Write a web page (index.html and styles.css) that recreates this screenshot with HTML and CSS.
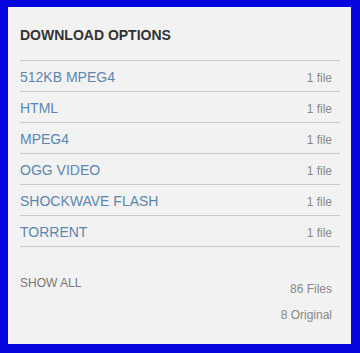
FILE: index.html
```html
<!DOCTYPE html>
<html>
<head>
<meta charset="utf-8">
<link rel="stylesheet" href="styles.css">
</head>
<body>
<div class="panel">
  <h2 class="title">DOWNLOAD OPTIONS</h2>
  <ul class="list">
    <li class="row"><a class="fmt">512KB MPEG4</a><span class="count">1 file</span></li>
    <li class="row"><a class="fmt">HTML</a><span class="count">1 file</span></li>
    <li class="row"><a class="fmt">MPEG4</a><span class="count">1 file</span></li>
    <li class="row"><a class="fmt">OGG VIDEO</a><span class="count">1 file</span></li>
    <li class="row"><a class="fmt">SHOCKWAVE FLASH</a><span class="count">1 file</span></li>
    <li class="row"><a class="fmt">TORRENT</a><span class="count">1 file</span></li>
  </ul>
  <div class="footer">
    <a class="showall">SHOW ALL</a>
    <div class="totals">
      <div>86 Files</div>
      <div>8 Original</div>
    </div>
  </div>
</div>
</body>
</html>
```
FILE: styles.css
```css
html, body {
  margin: 0;
  padding: 0;
}
body {
  font-family: "Liberation Sans", Arial, sans-serif;
}
.panel {
  box-sizing: border-box;
  width: 360px;
  height: 353px;
  background: #f2f2f2;
  border-style: solid;
  border-color: #0505e0;
  border-width: 7px 9px 9px 8px;
  padding: 0 11px 0 12px;
}
.title {
  margin: 20px 0 17px;
  font-size: 14px;
  line-height: 16px;
  font-weight: bold;
  color: #333333;
}
.list {
  list-style: none;
  margin: 0;
  padding: 0;
  border-top: 1px solid #c8c8c8;
}
.row {
  display: flex;
  justify-content: space-between;
  align-items: center;
  height: 28px;
  padding-top: 2px;
  border-bottom: 1px solid #c8c8c8;
}
.fmt {
  font-size: 14px;
  line-height: 28px;
  color: #5b86b1;
}
.count {
  font-size: 12px;
  line-height: 14px;
  margin-top: 2px;
  padding-right: 8px;
  color: #888888;
}
.footer {
  display: flex;
  justify-content: space-between;
  align-items: flex-start;
  margin-top: 29px;
}
.showall {
  font-size: 12px;
  line-height: 14px;
  color: #777777;
}
.totals {
  text-align: right;
  font-size: 12px;
  line-height: 26px;
  padding-right: 8px;
  color: #888888;
}
```
